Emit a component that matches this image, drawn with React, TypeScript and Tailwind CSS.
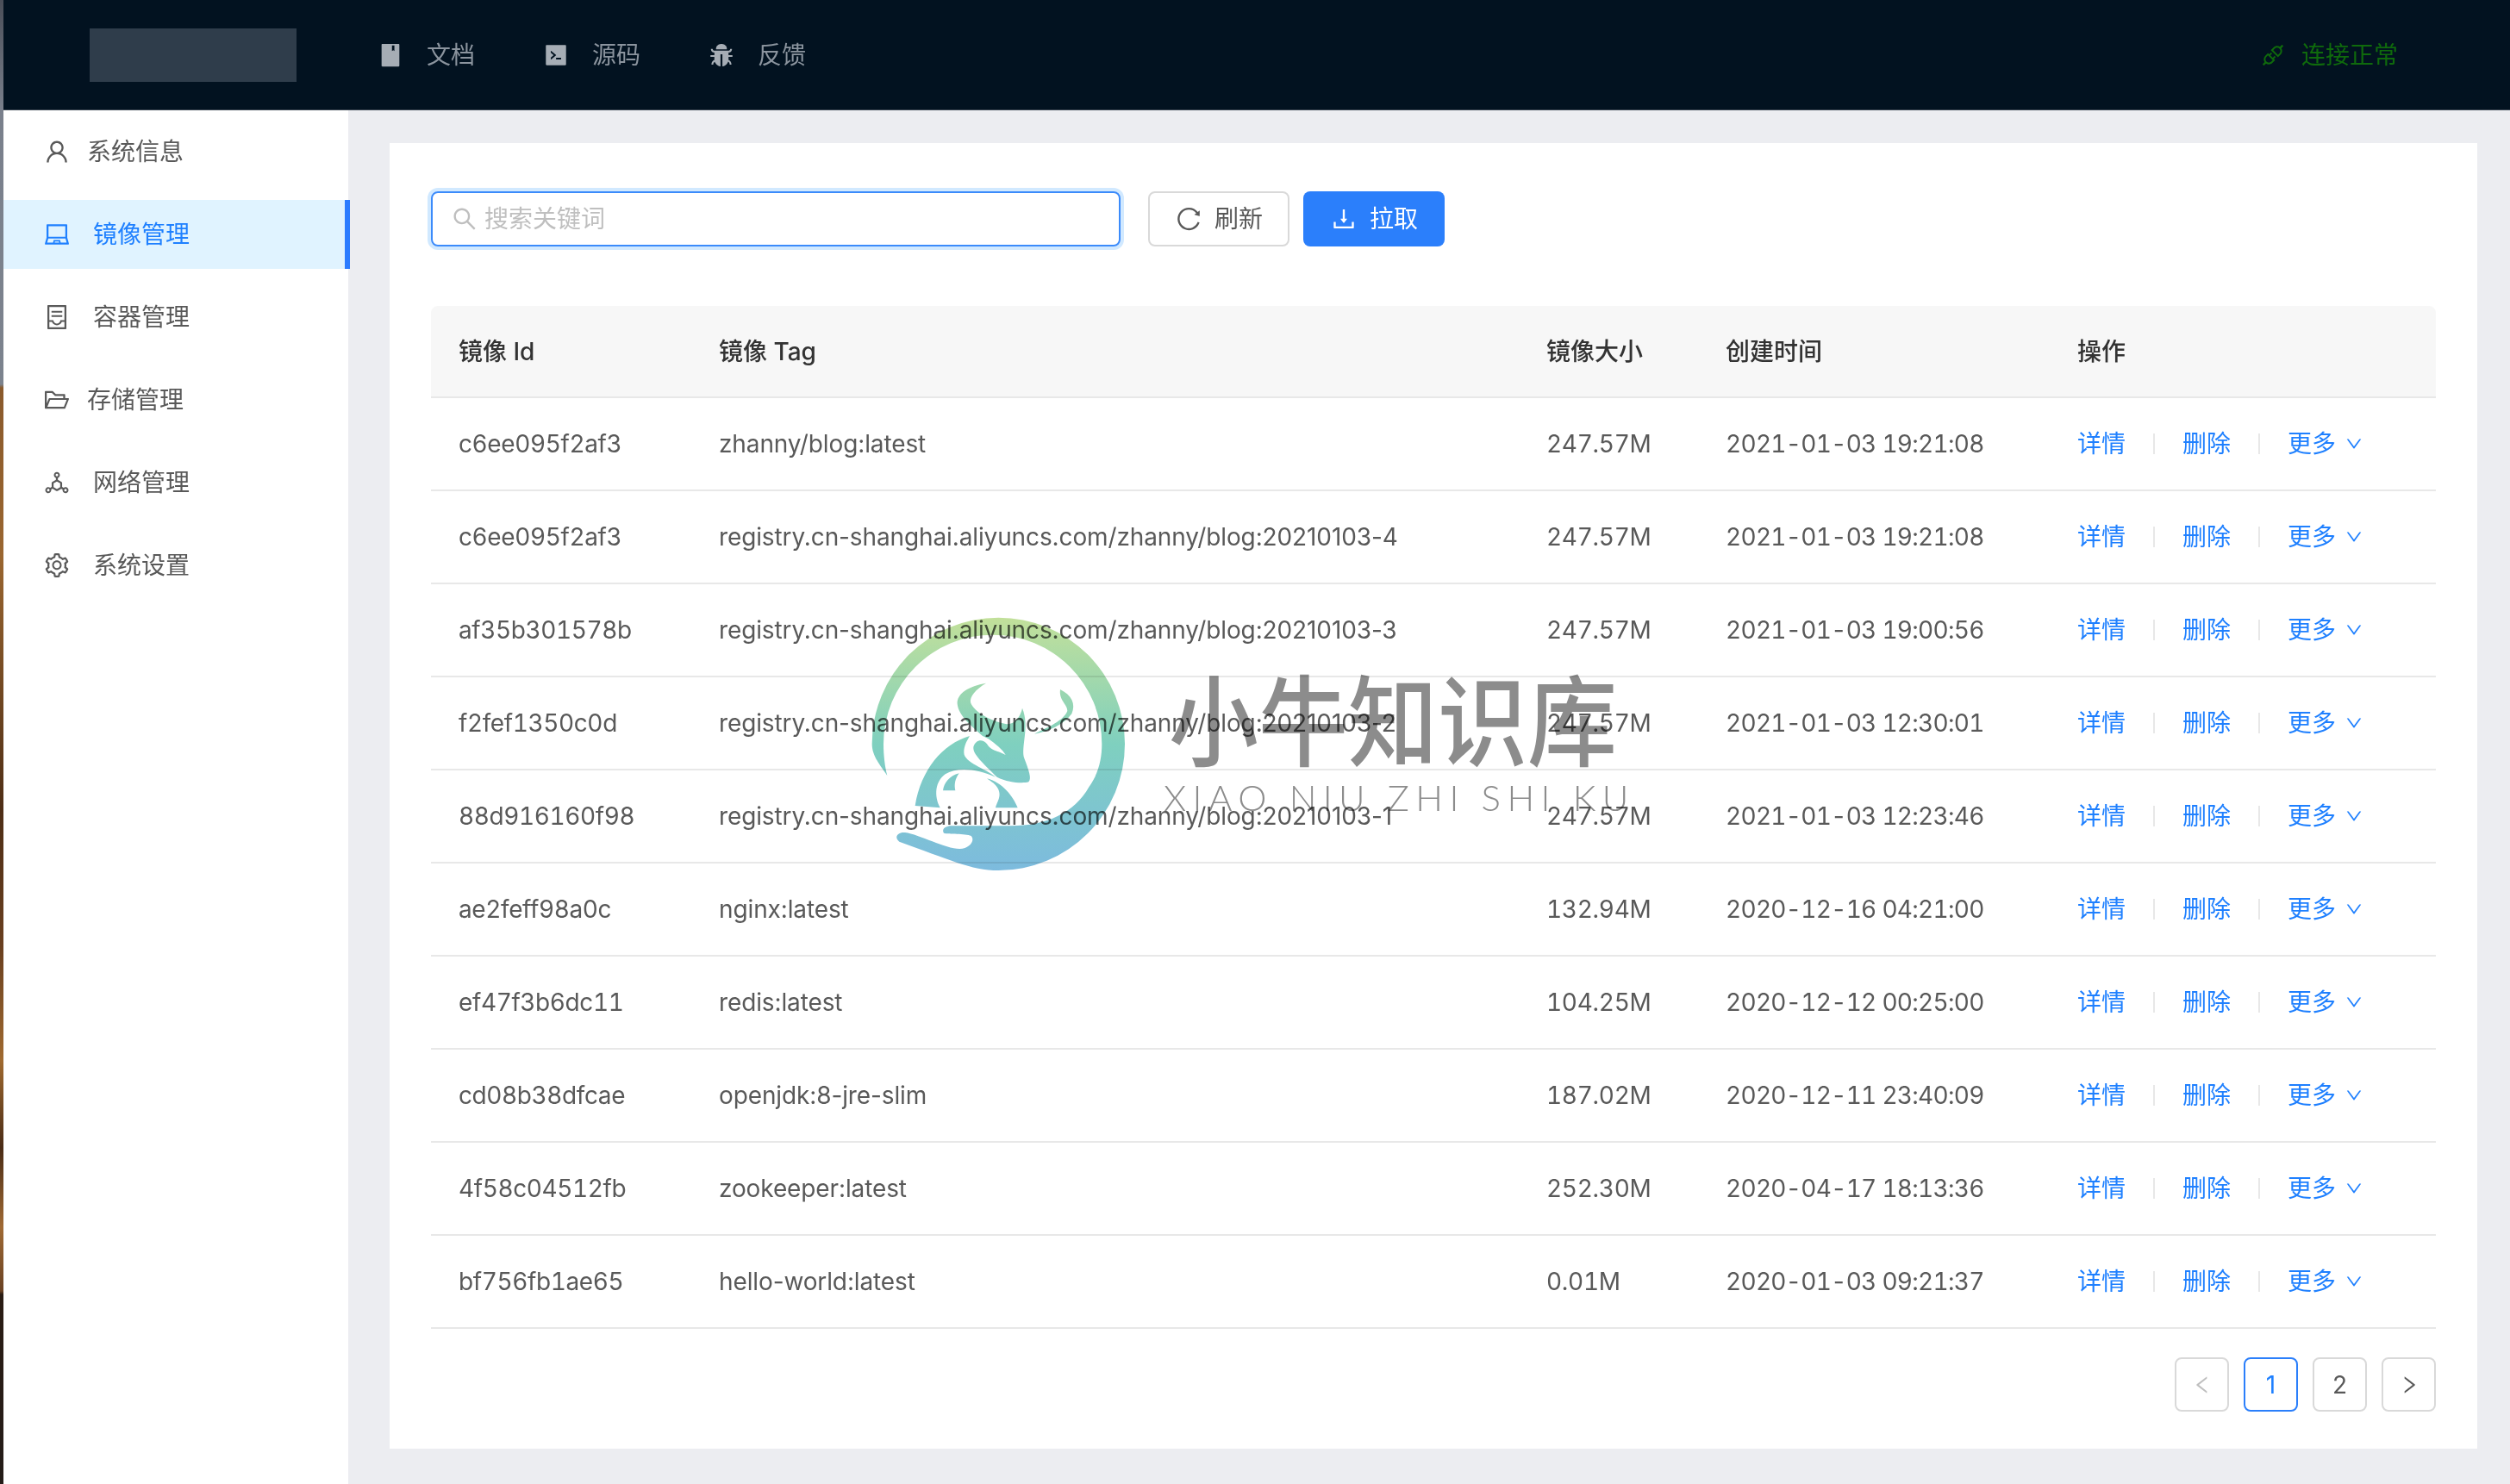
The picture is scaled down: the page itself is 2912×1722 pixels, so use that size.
import React from "react";
import {
  AiFillBook,
  AiFillBug,
  AiFillCode,
  AiOutlineApi,
  AiOutlineContainer,
  AiOutlineDeploymentUnit,
  AiOutlineDown,
  AiOutlineDownload,
  AiOutlineFolderOpen,
  AiOutlineLaptop,
  AiOutlineLeft,
  AiOutlineReload,
  AiOutlineRight,
  AiOutlineSearch,
  AiOutlineSetting,
  AiOutlineUser,
} from "react-icons/ai";

const menu = [
  { label: "系统信息", icon: AiOutlineUser, gap: "gap-[19px]" },
  { label: "镜像管理", icon: AiOutlineLaptop, gap: "gap-[26px]", active: true },
  { label: "容器管理", icon: AiOutlineContainer, gap: "gap-[26px]" },
  { label: "存储管理", icon: AiOutlineFolderOpen, gap: "gap-[19px]" },
  { label: "网络管理", icon: AiOutlineDeploymentUnit, gap: "gap-[26px]" },
  { label: "系统设置", icon: AiOutlineSetting, gap: "gap-[26px]" },
];

const images = [
  ["c6ee095f2af3", "zhanny/blog:latest", "247.57M", "2021-01-03 19:21:08"],
  ["c6ee095f2af3", "registry.cn-shanghai.aliyuncs.com/zhanny/blog:20210103-4", "247.57M", "2021-01-03 19:21:08"],
  ["af35b301578b", "registry.cn-shanghai.aliyuncs.com/zhanny/blog:20210103-3", "247.57M", "2021-01-03 19:00:56"],
  ["f2fef1350c0d", "registry.cn-shanghai.aliyuncs.com/zhanny/blog:20210103-2", "247.57M", "2021-01-03 12:30:01"],
  ["88d916160f98", "registry.cn-shanghai.aliyuncs.com/zhanny/blog:20210103-1", "247.57M", "2021-01-03 12:23:46"],
  ["ae2feff98a0c", "nginx:latest", "132.94M", "2020-12-16 04:21:00"],
  ["ef47f3b6dc11", "redis:latest", "104.25M", "2020-12-12 00:25:00"],
  ["cd08b38dfcae", "openjdk:8-jre-slim", "187.02M", "2020-12-11 23:40:09"],
  ["4f58c04512fb", "zookeeper:latest", "252.30M", "2020-04-17 18:13:36"],
  ["bf756fb1ae65", "hello-world:latest", "0.01M", "2020-01-03 09:21:37"],
];

const cols = "grid grid-cols-[302px_960px_208px_408px_448px] items-center";

function Header() {
  return (
    <header className="flex h-[128px] shrink-0 items-center border-b border-[#3a4450] bg-[#021220] pl-[100px] pr-[130px] text-[28px]">
      <div className="h-[62px] w-[240px] bg-[#2f3d4b]" />
      <nav className="ml-[94px] flex items-center gap-[79px] text-[#8b949e]">
        <a className="flex items-center gap-[27px]">
          <AiFillBook size={30} className="text-[#a6adb5]" />
          文档
        </a>
        <a className="flex items-center gap-[27px]">
          <AiFillCode size={30} className="text-[#a6adb5]" />
          源码
        </a>
        <a className="flex items-center gap-[27px]">
          <AiFillBug size={30} className="text-[#a6adb5]" />
          反馈
        </a>
      </nav>
      <div className="ml-auto flex items-center gap-[18px] text-[#0f6a0c]">
        <AiOutlineApi size={30} />
        连接正常
      </div>
    </header>
  );
}

function Sidebar() {
  return (
    <aside className="flex w-[400px] shrink-0 flex-col gap-[16px] bg-white pt-[8px] text-[28px] text-[#595959]">
      {menu.map((item) => {
        const Icon = item.icon;
        return (
          <div
            key={item.label}
            className={`relative flex h-[80px] items-center pl-[46px] ${item.gap} ${
              item.active ? "bg-[#e0f3ff] text-[#1f80ff]" : ""
            }`}
          >
            <Icon size={32} />
            {item.label}
            {item.active && <span className="absolute -right-[2px] top-0 h-full w-[6px] bg-[#2b7bff]" />}
          </div>
        );
      })}
    </aside>
  );
}

function Toolbar() {
  return (
    <div className="flex h-[64px] items-stretch text-[28px]">
      <div className="flex w-[800px] items-center gap-[7px] rounded-[8px] border-2 border-[#3b8bfb] pl-[21px] text-[#bfbfbf] shadow-[0_0_0_4px_rgba(24,144,255,0.2)]">
        <AiOutlineSearch size={32} />
        搜索关键词
      </div>
      <button className="ml-[32px] flex w-[164px] items-center justify-center gap-[14px] rounded-[8px] border-2 border-[#d9d9d9] text-[#595959]">
        <AiOutlineReload size={32} />
        刷新
      </button>
      <button className="ml-[16px] flex w-[164px] items-center justify-center gap-[14px] rounded-[8px] bg-[#2b7ffb] text-white">
        <AiOutlineDownload size={32} />
        拉取
      </button>
    </div>
  );
}

function ImageTable() {
  return (
    <div className="mt-[69px] text-[28px]">
      <div className={`${cols} h-[107px] rounded-t-[8px] border-b-2 border-[#e8e8e8] bg-[#f7f7f7] font-medium text-[#333333]`}>
        <div className="pl-[32px]">镜像 Id</div>
        <div className="pl-[32px]">镜像 Tag</div>
        <div className="pl-[32px]">镜像大小</div>
        <div className="pl-[32px]">创建时间</div>
        <div className="pl-[32px]">操作</div>
      </div>
      {images.map((row, i) => (
        <div key={i} className={`${cols} h-[108px] border-b-2 border-[#e8e8e8] text-[#595959]`}>
          <div className="pl-[32px] tabular-nums tracking-[-0.4px]">{row[0]}</div>
          <div className="pl-[32px] tracking-[-0.12px]">{row[1]}</div>
          <div className="pl-[32px] tabular-nums tracking-[-0.3px]">{row[2]}</div>
          <div className="pl-[32px] tabular-nums tracking-[-0.7px]">{row[3]}</div>
          <div className="flex items-center gap-[32px] pl-[32px] text-[#1f80ff]">
            <a>详情</a>
            <span className="h-[24px] w-[2px] bg-[#e8e8e8]" />
            <a>删除</a>
            <span className="h-[24px] w-[2px] bg-[#e8e8e8]" />
            <a className="flex items-center gap-[10px]">
              更多
              <AiOutlineDown size={22} />
            </a>
          </div>
        </div>
      ))}
    </div>
  );
}

function Pagination() {
  const box = "flex size-[63px] items-center justify-center rounded-[8px] border-2";
  return (
    <div className="mt-[33px] flex justify-end gap-[17px] text-[28px]">
      <div className={`${box} border-[#d9d9d9] text-[#bfbfbf]`}>
        <AiOutlineLeft size={26} />
      </div>
      <div className={`${box} border-[#2b7ffb] text-[#1f80ff]`}>1</div>
      <div className={`${box} border-[#d9d9d9] text-[#595959]`}>2</div>
      <div className={`${box} border-[#d9d9d9] text-[#595959]`}>
        <AiOutlineRight size={26} />
      </div>
    </div>
  );
}

function Watermark() {
  return (
    <div className="pointer-events-none absolute left-[1000px] top-[700px] flex mix-blend-multiply">
      <svg width="330" height="330" viewBox="0 0 990 990" className="shrink-0">
        <defs>
          <linearGradient id="wm" gradientUnits="userSpaceOnUse" x1="0" y1="50" x2="0" y2="930">
            <stop offset="0" stopColor="#c2e09a" />
            <stop offset="0.5" stopColor="#7fd0bf" />
            <stop offset="1" stopColor="#7dbbde" />
          </linearGradient>
        </defs>
        <g fill="url(#wm)">
          <path d="M88 600C60 560 35 530 35 490A440 440 0 0 1 915 490A440 440 0 0 1 475 930C380 930 300 890 130 830C110 815 125 795 150 798C200 805 290 855 340 855C375 855 395 825 380 810C360 800 300 805 285 800C275 785 295 775 310 775L520 775C640 775 740 730 790 640C825 590 835 540 835 490A380 380 0 0 0 75 490C75 530 80 570 88 600Z" />
          <path d="M432 278C372 288 330 314 332 350C336 392 385 430 420 462L440 472C465 490 490 510 500 528C470 512 450 515 435 490C420 470 395 475 388 500C385 525 420 555 470 605C510 625 560 628 580 622C592 610 580 580 565 540C552 500 585 430 558 365C552 395 530 425 500 420C450 410 390 380 378 345C375 325 395 300 432 278Z" />
          <path d="M690 300C730 320 745 350 730 385C700 425 650 445 600 455C650 430 700 410 715 375C715 350 685 340 690 300Z" />
          <path d="M375 462C280 490 205 580 185 705L272 712C250 670 255 620 290 595C330 570 400 575 465 605C430 575 355 555 355 520C355 495 365 480 375 462Z" />
          <path d="M338 592C305 600 285 625 282 652L325 652C320 630 325 610 338 592Z" />
          <path d="M435 610C490 625 525 670 542 712L465 712C470 690 490 670 470 640C460 625 445 618 435 610Z" />
        </g>
      </svg>
      <div className="ml-[26px] mt-[63px] flex flex-col text-[#8c8c8c]">
        <div className="origin-top scale-y-110 whitespace-nowrap text-[104px] font-medium leading-[137px]">小牛知识库</div>
        <div className="-ml-[6px] whitespace-nowrap font-['Lato',sans-serif] text-[42px] font-light leading-[50px] tracking-[7.4px]">
          XIAO NIU ZHI SHI KU
        </div>
      </div>
    </div>
  );
}

export default function App() {
  return (
    <div className="relative flex h-[1722px] w-[2912px] overflow-hidden bg-[#ecedf1] font-['Inter','Noto_Sans_CJK_SC',sans-serif]">
      <div className="w-[4px] shrink-0 bg-[linear-gradient(to_bottom,#4a4e58_0,#7a808c_130px,#7c838e_446px,#8a5a2c_450px,#9a6630_645px,#4e2e16_940px,#6a4020_1100px,#a06a30_1230px,#4a2c16_1332px,#a06a34_1424px,#6a4224_1498px,#2a1c14_1502px,#241c18_1722px)]" />
      <div className="flex min-w-0 flex-1 flex-col">
        <Header />
        <div className="flex flex-1">
          <Sidebar />
          <main className="flex-1 pb-[40px] pl-[48px] pr-[38px] pt-[38px]">
            <div className="bg-white px-[48px] pb-[43px] pt-[56px]">
              <Toolbar />
              <ImageTable />
              <Pagination />
            </div>
          </main>
        </div>
      </div>
      <Watermark />
    </div>
  );
}
